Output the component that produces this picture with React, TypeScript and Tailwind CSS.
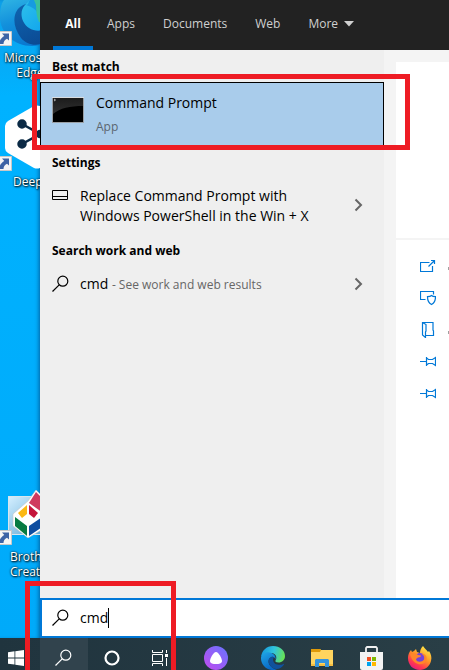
import type { ReactNode } from "react";

function SearchGlyph() {
  return (
    <svg width="18" height="18" viewBox="0 0 18 18" fill="none" stroke="currentColor" strokeWidth="1.2" aria-hidden="true">
      <circle cx="10.8" cy="6.2" r="5" />
      <path d="M7.2 9.800.5 16.500" />
    </svg>
  );
}

function Chevron() {
  return (
    <svg width="10" height="14" viewBox="0 0 10 14" fill="none" stroke="#666" strokeWidth="2" aria-hidden="true">
      <path d="m1.5 1.5 5.5 5.5-5.5 5.5" />
    </svg>
  );
}

function ConsoleIcon() {
  return (
    <svg width="32" height="26" viewBox="0 0 32 26" aria-hidden="true">
      <defs>
        <linearGradient id="gloss" x1="0" y1="0" x2="0" y2="1">
          <stop offset="0" stopColor="#1c1c1c" />
          <stop offset="1" stopColor="#303030" />
        </linearGradient>
      </defs>
      <rect width="32" height="26" fill="#9a9fa4" />
      <path d="M0 .5h32" stroke="#d9dde0" />
      <rect x="1" y="1" width="30" height="24" fill="#000" />
      <path d="M1 1h30v8C18 9 8 11 1 17Z" fill="url(#gloss)" />
      <path d="m2 2 1.5 1L2 4" stroke="#ddd" strokeWidth=".8" fill="none" />
    </svg>
  );
}

function ShortcutArrow() {
  return (
    <svg className="absolute bottom-0 left-0" width="12" height="15" viewBox="0 0 12 15" aria-hidden="true">
      <path d="M0 .5h11.5v14H0" fill="#f5f5f5" stroke="#c8c8c8" />
      <path d="M2 2.5h7v7L7 7.8C4.500 9 3.500 11 3.500 13H0V9.500C1 7.500 2.500 6 4.300 5Z" fill="#3d63a5" />
    </svg>
  );
}

function EdgeLogo() {
  return (
    <svg width="24" height="24" viewBox="0 0 48 48" aria-hidden="true">
      <defs>
        <linearGradient id="edge-top" x1="0" y1=".4" x2="1" y2=".6">
          <stop offset="0" stopColor="#1698dc" />
          <stop offset=".5" stopColor="#31c5dd" />
          <stop offset="1" stopColor="#6be34e" />
        </linearGradient>
        <linearGradient id="edge-left" x1="0" y1="0" x2=".5" y2="1">
          <stop offset="0" stopColor="#20a7e6" />
          <stop offset="1" stopColor="#0866c4" />
        </linearGradient>
      </defs>
      <path d="M0 23C1 9 11 0 24 0c14 0 24 9 24 20 0 8-6 13-13 13-5 0-7-2-6-4 4-6 1-14-8-15C11 13 2 17 0 23Z" fill="url(#edge-top)" />
      <path d="M0 23C3 13 13 11 21 14c6 2 9 8 8 13-1-4-5-6-8-5-8 3-8 14 0 20 3 3 7 5 11 5C16 52 1 41 0 26Z" fill="url(#edge-left)" />
      <path d="M21 22c-9 3-7 14 0 20 8 7 20 4 25-5 1-1 0-2-1-1-9 4-20 1-21-8 0-2 1-4 2-5-1-1-3-2-5-1Z" fill="#10529c" />
    </svg>
  );
}

function LargeEdgeLogo() {
  return (
    <svg width="56" height="46" viewBox="0 0 56 46" aria-hidden="true">
      <defs>
        <linearGradient id="big-body" x1="0" y1="0" x2=".4" y2="1">
          <stop offset="0" stopColor="#2fb4e4" />
          <stop offset=".5" stopColor="#1290dc" />
          <stop offset="1" stopColor="#0a78cf" />
        </linearGradient>
        <linearGradient id="big-wave" x1=".2" y1="0" x2=".6" y2="1">
          <stop offset="0" stopColor="#0e63af" />
          <stop offset="1" stopColor="#0b4a93" />
        </linearGradient>
        <linearGradient id="big-hollow" x1="0" y1="0" x2="1" y2="1">
          <stop offset="0" stopColor="#2fc0ea" />
          <stop offset="1" stopColor="#0ca2ee" />
        </linearGradient>
      </defs>
      <path d="M4 0h52v30C53 40 43 46 32 46 14 46 0 33 0 17 0 10 1 4 4 0Z" fill="url(#big-body)" />
      <path d="M26 4C12 8 11 25 21 38c5 6 14 9 23 5l12-8V25L34 6Z" fill="url(#big-wave)" />
      <path d="M25 5c-6 6-4 18 4 23 6 4 14 3 22 0V0H30Z" fill="url(#big-hollow)" />
      <path d="M30 0h26v22H41C39 13 36 8 26 5c3 0 2-3 4-5Z" fill="#169be0" />
      <path d="M34 0h22v22H39C37 18 36 12 36 5Z" fill="#39bf9b" />
    </svg>
  );
}

function HexLogo() {
  return (
    <svg width="64" height="64" viewBox="0 0 64 64" aria-hidden="true">
      <path d="M29 1q3-1 6 0l24 14q3 2 3 5v24q0 3-3 5L35 63q-3 1-6 0L3 48q-3-2-3-5V21q0-3 3-5Z" fill="#fff" />
      <g fill="#0b2a45" stroke="#0b2a45" strokeWidth="2.500">
        <path d="m17 19 18 10-18 10" fill="none" />
        <circle cx="17" cy="19" r="3.500" />
        <circle cx="17" cy="39" r="3.500" />
        <circle cx="35" cy="29" r="3" />
      </g>
    </svg>
  );
}

function CreativeLogo() {
  return (
    <svg width="44" height="48" viewBox="0 0 44 48" aria-hidden="true">
      <defs>
        <linearGradient id="tile" x1="0" y1="0" x2="1" y2="1">
          <stop offset="0" stopColor="#d5efff" />
          <stop offset="1" stopColor="#4e9fd0" />
        </linearGradient>
      </defs>
      <rect x=".5" y="6.500" width="43" height="38" fill="url(#tile)" stroke="#d9e6ed" />
      <path d="M5 24 20 11 28 0l12 12v24L20 48 5 36Z" fill="#fff" stroke="#c6c6c6" strokeWidth=".6" />
      <path d="m21 13 7-11 10 10v13Z" fill="#cf3a5e" />
      <path d="m10 23 9-8v9l-5 4Z" fill="#fbb814" />
      <path d="m21 15 9 8-4 5-5-4Z" fill="#c5153c" />
      <path d="m7 27 12 9v10L7 36Z" fill="#087b42" />
      <path d="m21 36 13-9v10l-13 9Z" fill="#0e4da0" />
    </svg>
  );
}

function OpenIcon() {
  return (
    <svg width="16" height="16" viewBox="0 0 16 16" fill="none" stroke="#0078d7" strokeWidth="1.200" aria-hidden="true">
      <path d="M9.500 4.500h-9v9h12V8M8.500 8.500l6-6M11 2.500h3.500V6" />
    </svg>
  );
}

function AdminIcon() {
  return (
    <svg width="16" height="16" viewBox="0 0 16 16" fill="none" stroke="#0078d7" strokeWidth="1.200" aria-hidden="true">
      <path d="M5.500 9.500h-5v-8h13V4.500" />
      <path d="M11.500 5.500c1 1 2.500 1.200 4 1.200 0 4-1 6.300-4 7.800-3-1.500-4-3.800-4-7.800 1.500 0 3-.2 4-1.200Z" />
    </svg>
  );
}

function LocationIcon() {
  return (
    <svg width="16" height="16" viewBox="0 0 16 16" fill="none" stroke="#0078d7" strokeWidth="1.200" aria-hidden="true">
      <path d="M3 .5h10V8l.5 1v4.500H6" />
      <path d="M2.500.5 6 2.500V9l-.500 1v5.500l-3-2.500V.5Z" />
    </svg>
  );
}

function PinIcon() {
  return (
    <svg width="16" height="16" viewBox="0 0 16 16" fill="none" stroke="#0078d7" strokeWidth="1.200" aria-hidden="true">
      <path d="M0 7.500h6M6.500 3v9M6.500 4 8.500 5.500h4l3-2v8l-3-2h-4l-2 1.500" />
    </svg>
  );
}

function DesktopItem({ label, children }: { label: ReactNode; children: ReactNode }) {
  return (
    <button className="block w-20 text-center text-xs leading-[15px] text-white [text-shadow:1px_1px_2px_#000,0_0_2px_#000]">
      {children}
      <span className="block whitespace-nowrap">{label}</span>
    </button>
  );
}

function Desktop() {
  return (
    <aside className="relative flex w-10 shrink-0 flex-col overflow-hidden bg-linear-to-b from-[#0d9fe8] via-[#00b2ff] via-15% to-[#00aafa] shadow-[inset_-3px_0_4px_-2px_#0060a0]">
      <div className="h-[125px] shrink-0">
        <DesktopItem label={<span className="block w-14 pl-1 text-center">Microsoft<br />Edge</span>}>
          <span className="relative mb-1 block h-[46px]">
            <LargeEdgeLogo />
            <ShortcutArrow />
          </span>
        </DesktopItem>
      </div>
      <div className="-mt-5 h-[386px] shrink-0">
        <DesktopItem label={<span className="block pl-[13px] text-left">DeepL</span>}>
          <span className="relative mb-1 block h-[65px] pl-[5px]">
            <HexLogo />
            <span className="absolute -bottom-px left-0"><ShortcutArrow /></span>
          </span>
        </DesktopItem>
      </div>
      <div className="-mt-px shrink-0">
        <DesktopItem label={<span className="block pl-[10px] text-left">Brother<br />Creative</span>}>
          <span className="relative mb-1 block h-[55px] pl-2">
            <CreativeLogo />
            <ShortcutArrow />
          </span>
        </DesktopItem>
      </div>
    </aside>
  );
}

function Tabs() {
  return (
    <nav className="flex h-[50px] shrink-0 bg-[#222] text-xs text-[#d0d0d0]">
      <button className="ml-[13px] w-10 border-b-4 border-[#0078d7] pt-0.5 text-center font-bold text-white">All</button>
      <div className="ml-[14px] flex gap-7 pb-0.5">
        <button>Apps</button>
        <button>Documents</button>
        <button>Web</button>
        <button className="flex items-center gap-1.5">
          More
          <svg width="10" height="6" viewBox="0 0 10 6" fill="currentColor" aria-hidden="true"><path d="M0 0h10L5 5.500Z" /></svg>
        </button>
      </div>
    </nav>
  );
}

function Results() {
  return (
    <section className="w-[344px] shrink-0 bg-[#efefef] text-black">
      <h2 className="flex h-8 items-center pt-0.5 pl-3 text-xs font-bold">Best match</h2>
      <div className="relative">
        <button className="flex h-[66px] w-full gap-3 border border-black bg-[#a9cceb] pt-[10px] pl-[11px] text-left">
          <span className="mt-1"><ConsoleIcon /></span>
          <span>
            <span className="block text-sm leading-5">Command Prompt</span>
            <span className="mt-1 block text-xs leading-5 text-[#5b6670]">App</span>
          </span>
        </button>
        <div className="pointer-events-none absolute -top-2 -right-[26px] -bottom-0.5 -left-2 z-10 border-5 border-[#ee1c24]" />
      </div>
      <h2 className="flex h-7 items-center pt-0.5 pl-3 text-xs font-bold">Settings</h2>
      <button className="flex h-[62px] w-full items-start pt-[10px] pr-5 pl-3 text-left">
        <svg className="mt-1" width="16" height="10" viewBox="0 0 16 10" fill="none" stroke="#000" aria-hidden="true"><path d="M.5.500h15v9H.5ZM.5 6.500h15" /></svg>
        <span className="ml-3 flex-1 text-sm leading-5">Replace Command Prompt with<br />Windows PowerShell in the Win + X</span>
        <span className="mt-3"><Chevron /></span>
      </button>
      <h2 className="flex h-6 items-center pt-0.5 pl-3 text-xs font-bold">Search work and web</h2>
      <button className="flex h-11 w-full items-center pr-5 pl-3 text-left">
        <SearchGlyph />
        <span className="ml-[10px] flex-1 text-sm leading-5">cmd <span className="text-xs text-[#666]">- See work and web results</span></span>
        <Chevron />
      </button>
    </section>
  );
}

const actions = [
  { name: "Open", icon: <OpenIcon />, mark: true },
  { name: "Run as administrator", icon: <AdminIcon />, mark: false },
  { name: "Open file location", icon: <LocationIcon />, mark: true },
  { name: "Pin to Start", icon: <PinIcon />, mark: false },
  { name: "Pin to taskbar", icon: <PinIcon />, mark: false },
];

function Preview() {
  return (
    <section className="flex flex-1 flex-col bg-[#f4f4f4] pt-3 pl-3">
      <div className="h-[176px] shrink-0 bg-white" />
      <div className="mt-0.5 flex flex-1 flex-col bg-white pt-[10px] pl-6">
        {actions.map((action) => (
          <button key={action.name} aria-label={action.name} className="flex h-8 items-center justify-between">
            {action.icon}
            {action.mark && <span className="mt-1 h-[3px] w-px bg-[#a0a0a0]" />}
          </button>
        ))}
      </div>
    </section>
  );
}

function SearchBox() {
  return (
    <label className="flex h-10 shrink-0 items-center border-2 border-r-0 border-[#0078d7] bg-white pl-[10px]">
      <SearchGlyph />
      <input aria-label="Search" defaultValue="cmd" className="ml-[10px] text-sm leading-5 outline-none [field-sizing:content]" />
      <span className="h-5 w-px bg-black" />
    </label>
  );
}

function TaskButton({ name, children, className = "" }: { name: string; children: ReactNode; className?: string }) {
  return (
    <button aria-label={name} className={"flex h-10 w-12 shrink-0 items-center justify-center text-white " + className}>
      {children}
    </button>
  );
}

function Taskbar() {
  return (
    <footer className="flex h-8 shrink-0 overflow-hidden bg-linear-to-r from-[#20343e] to-[#293e46]">
      <button aria-label="Start" className="flex h-10 w-10 shrink-0 items-center pl-2">
        <svg width="16" height="16" viewBox="0 0 16 16" fill="#fff" aria-hidden="true"><path d="M0 2.200 6.500 1.300V7.500H0ZM7.300 1.200 16 0v7.500H7.300ZM0 8.400h6.500v6.200L0 13.700ZM7.300 8.400H16V16l-8.700-1.300Z" /></svg>
      </button>
      <TaskButton name="Search" className="bg-[#31434d]"><SearchGlyph /></TaskButton>
      <TaskButton name="Cortana">
        <svg width="16" height="16" viewBox="0 0 16 16" fill="none" stroke="currentColor" strokeWidth="2.200" aria-hidden="true"><circle cx="8" cy="8" r="6.500" /></svg>
      </TaskButton>
      <TaskButton name="Task view">
        <svg width="16" height="16" viewBox="0 0 16 16" fill="none" stroke="currentColor" aria-hidden="true">
          <path d="M.5 0v2.500h10V0M.5 16v-2.500h10V16M.5 4.500h10v7H.5ZM14.500 0v3M14.500 8v8" />
          <path d="M13 4h3v3h-3Z" fill="currentColor" stroke="none" />
        </svg>
      </TaskButton>
      <TaskButton name="Alice" className="ml-2">
        <svg width="24" height="24" viewBox="0 0 24 24" aria-hidden="true">
          <defs><linearGradient id="alice" x1="1" y1="0" x2="0" y2="1"><stop offset="0" stopColor="#6574ff" /><stop offset="1" stopColor="#c44bef" /></linearGradient></defs>
          <circle cx="12" cy="12" r="12" fill="url(#alice)" />
          <path d="M12 6c2.500 0 6 6.500 6 9s-3 3-6 3-6-.5-6-3 3.500-9 6-9Z" fill="#fff" />
        </svg>
      </TaskButton>
      <div className="ml-[9px] flex gap-px">
        <TaskButton name="Microsoft Edge"><EdgeLogo /></TaskButton>
        <TaskButton name="File Explorer">
          <svg width="22" height="20" viewBox="0 0 22 20" aria-hidden="true">
            <path d="M0 1h9l1 1h12v16H0Z" fill="#ffd45f" />
            <path d="M0 1h9l1 1-1 2H0Z" fill="#df9a09" />
            <path d="M0 16h22v2H0Z" fill="#f5bd42" />
            <path d="M4 19v-7l1-1h12l1 1v7h-4v-4H8v4Z" fill="#3694dc" />
          </svg>
        </TaskButton>
        <TaskButton name="Microsoft Store">
          <svg width="23" height="26" viewBox="0 0 23 26" aria-hidden="true">
            <path d="M6 8V3l1-1h9l1 1v5" fill="none" stroke="#f0f0f0" strokeWidth="1.800" />
            <path d="M0 7h23v16q0 2-2 2H2q-2 0-2-2Z" fill="#f3f3f3" />
            <path d="M7 12h4v4H7Z" fill="#f25022" /><path d="M12 12h4v4h-4Z" fill="#7fba00" />
            <path d="M7 17h4v4H7Z" fill="#00a4ef" /><path d="M12 17h4v4h-4Z" fill="#ffb900" />
          </svg>
        </TaskButton>
        <TaskButton name="Firefox">
          <svg width="24" height="24" viewBox="0 0 24 24" aria-hidden="true">
            <defs><linearGradient id="fox" x1=".8" y1="0" x2=".2" y2="1"><stop offset="0" stopColor="#fff04a" /><stop offset=".45" stopColor="#ff9126" /><stop offset=".75" stopColor="#ff3850" /><stop offset="1" stopColor="#e01584" /></linearGradient></defs>
            <path d="M15 0c2 3 4 4 5 6l1-1c2 3 3 6 2 10-1 5-6 9-11 9C5 24 0 19 0 12c0-3 1-6 3-8l1 2 2-1 2-2 1 3 3 1c0-3 1-5 3-7Z" fill="url(#fox)" />
            <circle cx="12" cy="12" r="5" fill="#7542d8" />
            <path d="M2 8c3-2 6-1 8 1l3 .5c0 1-1 2-3 2-1 1-2 1-2 2 1 3 6 3 8 0 1-3-1-5-3-6 5 0 7 4 5 8-2 3-7 4-11 1-3-2-4-5-5-8.500Z" fill="#ff8629" />
          </svg>
        </TaskButton>
      </div>
    </footer>
  );
}

export default function App() {
  return (
    <main className="relative flex h-screen flex-col overflow-hidden bg-[#efefef] font-['Open_Sans','Noto_Sans',sans-serif]">
      <div className="flex min-h-0 flex-1">
        <Desktop />
        <div className="flex min-w-0 flex-1 flex-col">
          <Tabs />
          <div className="flex min-h-0 flex-1">
            <Results />
            <Preview />
          </div>
          <SearchBox />
        </div>
      </div>
      <Taskbar />
      <div className="pointer-events-none absolute bottom-0 left-[25px] h-[89px] w-[151px] border-5 border-b-0 border-[#ee1c24]" />
    </main>
  );
}
